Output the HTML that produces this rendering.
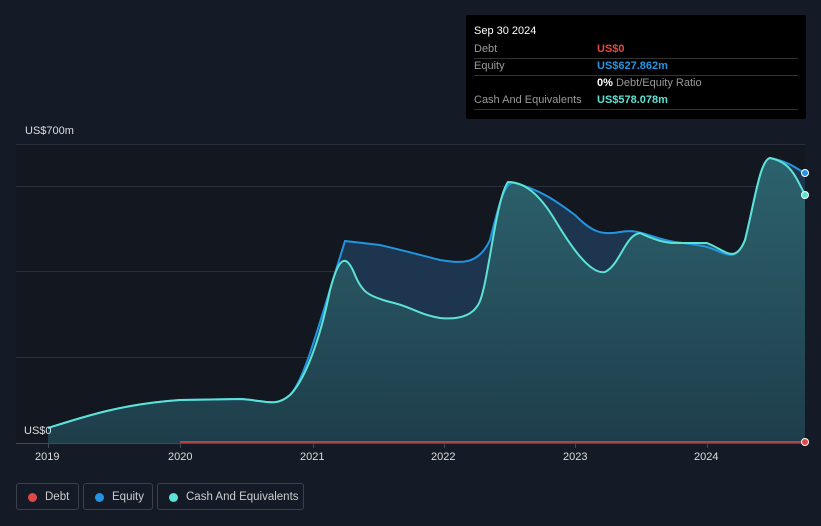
<!DOCTYPE html><html><head><style>
body{margin:0;width:821px;height:526px;background:#151b26;font-family:"Liberation Sans",sans-serif;overflow:hidden;position:relative}
.tt{position:absolute;left:466px;top:15px;width:340px;height:104px;background:#000;border-radius:2px;font-size:11px;color:#999}
.tt .r{position:absolute;left:8px;right:8px;border-bottom:1px solid #333;height:17px;line-height:17px}
.lg{position:absolute;top:483px;height:27px;border:1px solid #3a404c;border-radius:3px;color:#ccc;font-size:11.5px;line-height:27px;box-sizing:border-box}
.lg i{position:absolute;left:11px;top:9px;width:9px;height:9px;border-radius:50%}
.ax{position:absolute;color:#ddd;font-size:11px}
</style></head><body>
<svg width="821" height="526" style="position:absolute;left:0;top:0">
<defs><linearGradient id="g" x1="0" y1="0" x2="0" y2="1"><stop offset="0" stop-color="#2e6a72"/><stop offset="1" stop-color="#1f3f4a"/></linearGradient></defs>
<rect x="16" y="144" width="789" height="299" fill="#121720"/>
<g stroke="#2a303b" stroke-width="1"><line x1="16" y1="144.5" x2="805" y2="144.5"/><line x1="16" y1="186.5" x2="805" y2="186.5"/><line x1="16" y1="271.5" x2="805" y2="271.5"/><line x1="16" y1="357.5" x2="805" y2="357.5"/></g>
<path d="M48,428 C80,418 120,404 180,400 L240,399 C265,400 275,408 290,395 C305,380 320,320 345,241 L380,245 C410,252 420,255 440,260 C460,263 478,266 490,240 C500,200 505,181 515,183 C540,190 555,200 575,215 C590,230 600,236 620,232 C640,228 650,238 675,242 C690,244 700,245 707,247 C725,252 735,265 745,240 C755,200 760,160 770,158 C790,162 795,168 805,173 L805,443 L48,443 Z" fill="#1e3550"/>
<path d="M48,428 C80,418 120,404 180,400 L240,399 C265,400 275,408 290,395 C305,380 320,340 330,290 C338,260 345,250 355,275 C362,292 368,296 390,302 C410,306 420,315 440,318 C460,320 472,315 478,305 C488,290 495,200 508,182 C525,182 540,195 555,220 C570,245 590,275 605,272 C620,265 625,235 640,233 C655,240 665,243 675,243 L707,243 C725,250 735,265 745,240 C755,200 760,160 770,158 C790,162 795,175 805,195 L805,443 L48,443 Z" fill="url(#g)" opacity=".85"/>
<path d="M48,428 C80,418 120,404 180,400 L240,399 C265,400 275,408 290,395 C305,380 320,320 345,241 L380,245 C410,252 420,255 440,260 C460,263 478,266 490,240 C500,200 505,181 515,183 C540,190 555,200 575,215 C590,230 600,236 620,232 C640,228 650,238 675,242 C690,244 700,245 707,247 C725,252 735,265 745,240 C755,200 760,160 770,158 C790,162 795,168 805,173" fill="none" stroke="#2394df" stroke-width="2"/>
<path d="M48,428 C80,418 120,404 180,400 L240,399 C265,400 275,408 290,395 C305,380 320,340 330,290 C338,260 345,250 355,275 C362,292 368,296 390,302 C410,306 420,315 440,318 C460,320 472,315 478,305 C488,290 495,200 508,182 C525,182 540,195 555,220 C570,245 590,275 605,272 C620,265 625,235 640,233 C655,240 665,243 675,243 L707,243 C725,250 735,265 745,240 C755,200 760,160 770,158 C790,162 795,175 805,195" fill="none" stroke="#5de3d4" stroke-width="2"/>
<line x1="16" y1="443.5" x2="805" y2="443.5" stroke="#444a55"/>
<line x1="180" y1="442" x2="805" y2="442" stroke="#e04848" stroke-width="1.5"/>
<g stroke="#444a55"><line x1="48.5" y1="443" x2="48.5" y2="448"/><line x1="180.5" y1="443" x2="180.5" y2="448"/><line x1="313.5" y1="443" x2="313.5" y2="448"/><line x1="444.5" y1="443" x2="444.5" y2="448"/><line x1="575.5" y1="443" x2="575.5" y2="448"/><line x1="707.5" y1="443" x2="707.5" y2="448"/></g>
<circle cx="805" cy="173" r="3.5" fill="#2394df" stroke="#fff" stroke-width="1"/>
<circle cx="805" cy="195" r="3.5" fill="#5de3d4" stroke="#fff" stroke-width="1"/>
<circle cx="805" cy="442" r="3.5" fill="#e04848" stroke="#fff" stroke-width="1"/>
</svg>
<div class="ax" style="left:25px;top:125px">US$700m</div>
<div class="ax" style="left:24px;top:425px">US$0</div>
<div class="ax" style="left:35px;top:451px">2019</div>
<div class="ax" style="left:168px;top:451px">2020</div>
<div class="ax" style="left:300px;top:451px">2021</div>
<div class="ax" style="left:431px;top:451px">2022</div>
<div class="ax" style="left:563px;top:451px">2023</div>
<div class="ax" style="left:694px;top:451px">2024</div>
<div class="tt">
<div style="position:absolute;left:8px;top:10px;color:#fff;font-size:11px">Sep 30 2024</div>
<div class="r" style="top:26px">Debt<span style="position:absolute;left:123px;color:#e04848;font-weight:bold">US$0</span></div>
<div class="r" style="top:43px">Equity<span style="position:absolute;left:123px;color:#2394df;font-weight:bold">US$627.862m</span></div>
<div class="r" style="top:60px;border:0"><span style="position:absolute;left:123px"><b style="color:#fff">0%</b> Debt/Equity Ratio</span></div>
<div class="r" style="top:77px">Cash And Equivalents<span style="position:absolute;left:123px;color:#5de3d4;font-weight:bold">US$578.078m</span></div>
</div>
<div class="lg" style="left:16px;width:63px"><i style="background:#e04848"></i><span style="margin-left:28px">Debt</span></div>
<div class="lg" style="left:83px;width:70px"><i style="background:#2394df"></i><span style="margin-left:28px">Equity</span></div>
<div class="lg" style="left:157px;width:147px"><i style="background:#5de3d4"></i><span style="margin-left:28px">Cash And Equivalents</span></div>
</body></html>
